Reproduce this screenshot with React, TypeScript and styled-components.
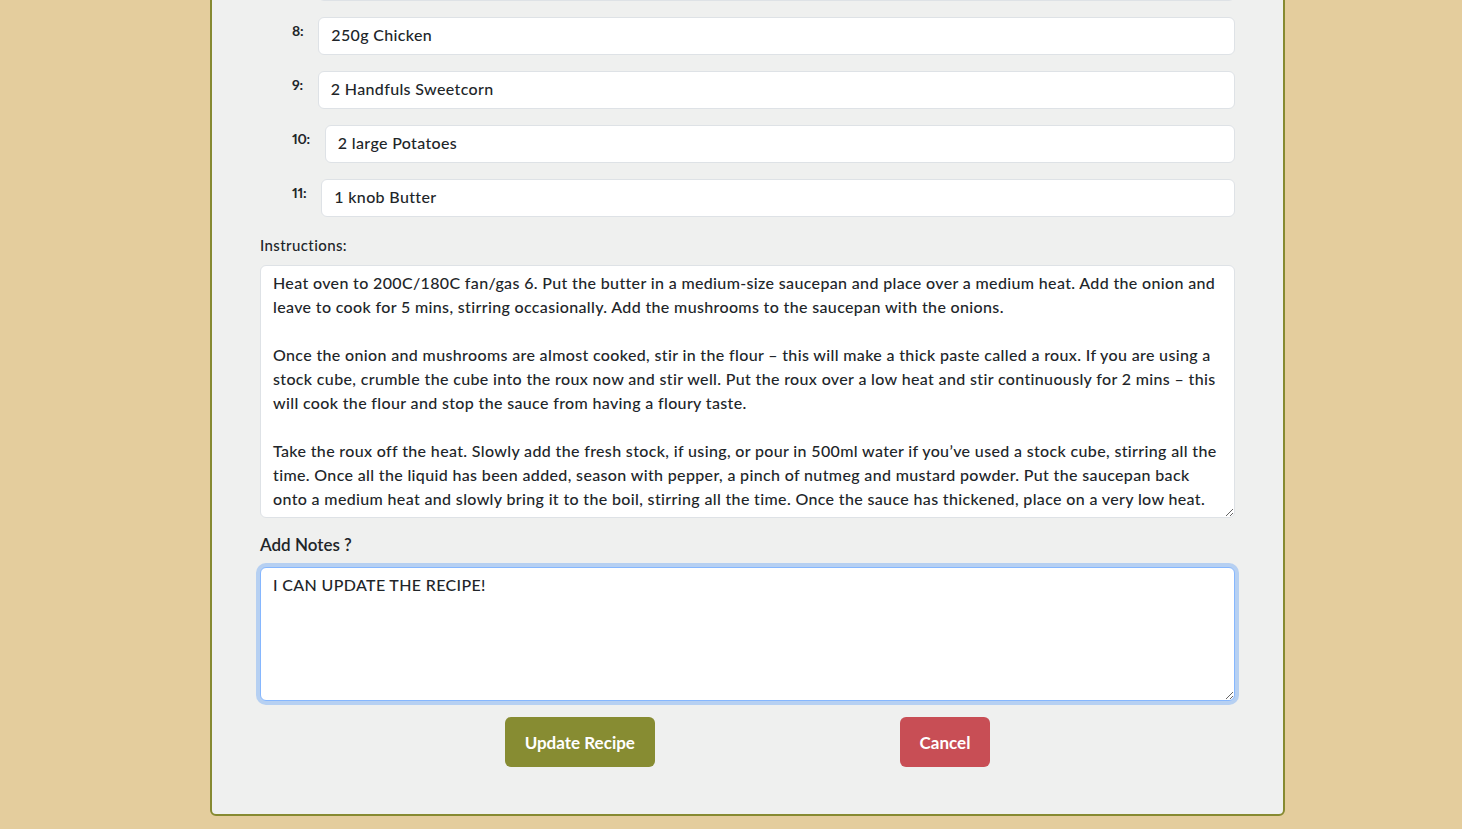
import React, { useLayoutEffect } from "react";
import styled, { createGlobalStyle } from "styled-components";

const Global = createGlobalStyle`
  html { scrollbar-width: none; }
  html::-webkit-scrollbar, body::-webkit-scrollbar { display: none; width: 0; height: 0; }
  body {
    margin: 0;
    background: #e4cd9d;
    font-family: "Lato", "Open Sans", sans-serif;
    color: #212529;
  }
  * { box-sizing: border-box; }
`;

const Page = styled.div`
  padding: 24px 177px 13px 210px;
`;

const Card = styled.form`
  width: 1075px;
  background: #eff0ef;
  border: 2px solid #868a31;
  border-radius: 6px;
  padding: 24px 48px 47px;
  display: flex;
  flex-direction: column;
`;

const Title = styled.h2`
  margin: 0 0 20px;
  text-align: center;
  font-size: 28px;
  font-weight: 700;
  color: #212529;
`;

const FieldLabel = styled.label<{ $emphasis?: boolean }>`
  display: block;
  font-size: ${(p) => (p.$emphasis ? 17 : 15)}px;
  font-weight: ${(p) => (p.$emphasis ? 600 : 500)};
  line-height: 24px;
  margin: 0 0 ${(p) => (p.$emphasis ? 10 : 8)}px;
  letter-spacing: ${(p) => (p.$emphasis ? 0 : 0.4)}px;
`;

const Ingredients = styled.div`
  display: flex;
  flex-direction: column;
  gap: 16px;
  padding-left: 32px;
  margin-bottom: 16px;
`;

const Row = styled.div`
  display: flex;
  align-items: flex-start;
`;

const RowLabel = styled.label`
  font-size: 14px;
  font-weight: 700;
  line-height: 18px;
  padding-top: 5px;
  margin-right: 15px;
  white-space: nowrap;
  font-variant-numeric: proportional-nums;
  letter-spacing: -0.3px;
`;

const TextInput = styled.input`
  flex: 1;
  height: 38px;
  padding: 4px 12px 8px;
  font-family: inherit;
  font-size: 16px;
  font-weight: 500;
  letter-spacing: 0.35px;
  color: #212529;
  background: #fff;
  border: 1px solid #dee2e6;
  border-radius: 6px;
  outline: none;
`;

const TextArea = styled.textarea<{ $height: number; $focused?: boolean }>`
  display: block;
  width: 100%;
  height: ${(p) => p.$height}px;
  padding: 5px 12px 6px;
  font-family: inherit;
  font-size: 16px;
  font-weight: 500;
  letter-spacing: 0.35px;
  line-height: 24px;
  color: #212529;
  background: #fff;
  border: 1px solid ${(p) => (p.$focused ? "#86b7fe" : "#dee2e6")};
  border-radius: 6px;
  box-shadow: ${(p) => (p.$focused ? "0 0 0 4px rgba(13, 110, 253, 0.25)" : "none")};
  outline: none;
  overflow: hidden;
  white-space: pre;
  resize: vertical;
`;

const Group = styled.div<{ $mb?: number }>`
  margin-bottom: ${(p) => p.$mb ?? 16}px;
`;

const Actions = styled.div`
  display: flex;
  justify-content: space-evenly;
`;

const Button = styled.button<{ $variant: "primary" | "danger" }>`
  height: 50px;
  padding: 0 20px;
  border: none;
  border-radius: 6px;
  font-family: inherit;
  font-size: 17px;
  font-weight: 700;
  color: #fff;
  background: ${(p) => (p.$variant === "primary" ? "#878c32" : "#c84e55")};
  cursor: pointer;
`;

const ingredients = [
  "1 Onion, chopped",
  "200g Mushrooms",
  "2 tbsp Plain Flour",
  "1 Chicken Stock Cube",
  "1 pinch Nutmeg",
  "1 tsp Mustard Powder",
  "1 sheet Puff Pastry",
  "250g Chicken",
  "2 Handfuls Sweetcorn",
  "2 large Potatoes",
  "1 knob Butter",
];

const instructions = [
  "Heat oven to 200C/180C fan/gas 6. Put the butter in a medium-size saucepan and place over a medium heat. Add the onion and",
  "leave to cook for 5 mins, stirring occasionally. Add the mushrooms to the saucepan with the onions.",
  "",
  "Once the onion and mushrooms are almost cooked, stir in the flour – this will make a thick paste called a roux. If you are using a",
  "stock cube, crumble the cube into the roux now and stir well. Put the roux over a low heat and stir continuously for 2 mins – this",
  "will cook the flour and stop the sauce from having a floury taste.",
  "",
  "Take the roux off the heat. Slowly add the fresh stock, if using, or pour in 500ml water if you’ve used a stock cube, stirring all the",
  "time. Once all the liquid has been added, season with pepper, a pinch of nutmeg and mustard powder. Put the saucepan back",
  "onto a medium heat and slowly bring it to the boil, stirring all the time. Once the sauce has thickened, place on a very low heat.",
  "Add the cooked chicken and sweetcorn to the sauce and stir well. Cover with the potatoes, top with butter and bake for 30 mins.",
].join("\n");

export default function App() {
  useLayoutEffect(() => {
    window.scrollTo(0, document.documentElement.scrollHeight);
  }, []);

  return (
    <>
      <Global />
      <Page>
        <Card onSubmit={(e) => e.preventDefault()}>
          <Title>Edit Recipe</Title>
          <Group>
            <FieldLabel>Recipe Name:</FieldLabel>
            <TextInput defaultValue="Chicken Pie" />
          </Group>
          <FieldLabel>Ingredients:</FieldLabel>
          <Ingredients>
            {ingredients.map((ing, i) => (
              <Row key={i}>
                <RowLabel>{i + 1}:</RowLabel>
                <TextInput defaultValue={ing} />
              </Row>
            ))}
          </Ingredients>
          <FieldLabel>Instructions:</FieldLabel>
          <Group $mb={15}>
            <TextArea $height={253} defaultValue={instructions} />
          </Group>
          <FieldLabel $emphasis>Add Notes ?</FieldLabel>
          <Group>
            <TextArea $height={134} $focused defaultValue="I CAN UPDATE THE RECIPE!" />
          </Group>
          <Actions>
            <Button type="submit" $variant="primary">Update Recipe</Button>
            <Button type="button" $variant="danger">Cancel</Button>
          </Actions>
        </Card>
      </Page>
    </>
  );
}
